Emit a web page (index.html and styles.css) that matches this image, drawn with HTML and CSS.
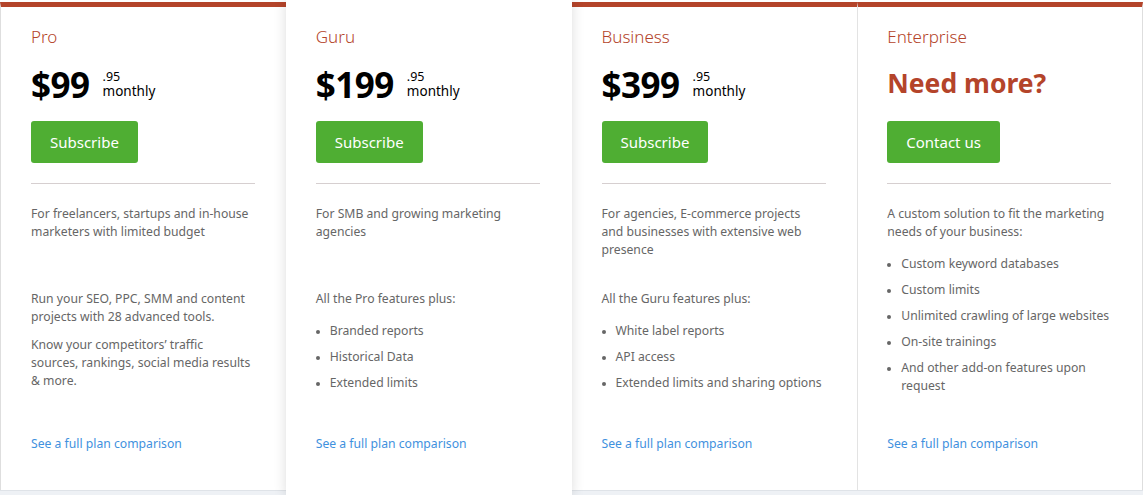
FILE: index.html
```html
<!DOCTYPE html>
<html lang="en">
<head>
<meta charset="utf-8">
<title>Plans</title>
<link rel="stylesheet" href="styles.css">
</head>
<body>
<div class="plans">
  <div class="card">
    <div class="name">Pro</div>
    <div class="price"><span class="amount">$99</span><span class="cents"><span class="c">.95</span><span class="m">monthly</span></span></div>
    <a class="btn">Subscribe</a>
    <hr class="divider">
    <div class="desc"><p>For freelancers, startups and in-house marketers with limited budget</p></div>
    <div class="features">
      <p>Run your SEO, PPC, SMM and content projects with 28 advanced tools.</p>
      <p>Know your competitors’ traffic<br>sources, rankings, social media results &amp; more.</p>
    </div>
    <a class="link">See a full plan comparison</a>
  </div>
  <div class="card featured">
    <div class="name">Guru</div>
    <div class="price"><span class="amount">$199</span><span class="cents"><span class="c">.95</span><span class="m">monthly</span></span></div>
    <a class="btn">Subscribe</a>
    <hr class="divider">
    <div class="desc"><p>For SMB and growing marketing agencies</p></div>
    <div class="features">
      <p>All the Pro features plus:</p>
      <ul>
        <li>Branded reports</li>
        <li>Historical Data</li>
        <li>Extended limits</li>
      </ul>
    </div>
    <a class="link">See a full plan comparison</a>
  </div>
  <div class="card">
    <div class="name">Business</div>
    <div class="price"><span class="amount">$399</span><span class="cents"><span class="c">.95</span><span class="m">monthly</span></span></div>
    <a class="btn">Subscribe</a>
    <hr class="divider">
    <div class="desc"><p>For agencies, E-commerce projects<br>and businesses with extensive web presence</p></div>
    <div class="features">
      <p>All the Guru features plus:</p>
      <ul>
        <li>White label reports</li>
        <li>API access</li>
        <li>Extended limits and sharing options</li>
      </ul>
    </div>
    <a class="link">See a full plan comparison</a>
  </div>
  <div class="card last">
    <div class="name">Enterprise</div>
    <div class="price"><span class="need">Need more?</span></div>
    <a class="btn">Contact us</a>
    <hr class="divider">
    <div class="enterprise">
      <p>A custom solution to fit the marketing needs of your business:</p>
      <ul>
        <li>Custom keyword databases</li>
        <li>Custom limits</li>
        <li>Unlimited crawling of large websites</li>
        <li>On-site trainings</li>
        <li>And other add-on features upon request</li>
      </ul>
    </div>
    <a class="link">See a full plan comparison</a>
  </div>
</div>
</body>
</html>
```

FILE: styles.css
```css
html, body {
  margin: 0;
  padding: 0;
}
body {
  background: #eef1f5;
  font-family: "Noto Sans", "Open Sans", sans-serif;
  color: #666;
  width: 1143px;
  height: 495px;
  overflow: hidden;
}
.plans {
  display: grid;
  grid-template-columns: repeat(4, 1fr);
  background: #fff;
  padding-top: 2px;
  height: 491px;
  box-sizing: border-box;
  border-bottom: 1px solid #dfe3e8;
}
.card {
  display: flex;
  flex-direction: column;
  background: #fff;
  border-top: 5px solid #b4442a;
  padding: 20px 30px 37px 30px;
  box-sizing: border-box;
  min-width: 0;
}
.card:first-child {
  border-left: 1px solid #dedede;
}
.card.featured {
  border-top: 0;
  margin-top: -2px;
  margin-bottom: -6px;
  padding-top: 27px;
  padding-bottom: 43px;
  box-shadow: 0 0 12px rgba(0, 0, 0, 0.14);
  position: relative;
  z-index: 1;
}
.card.last {
  border-left: 1px solid #e3e3e3;
  border-right: 1px solid #dedede;
  padding-left: 29px;
}
.name {
  font-size: 17px;
  line-height: 20px;
  color: #b4442a;
  font-weight: 300;
}
.price {
  display: flex;
  align-items: flex-start;
  height: 42px;
  margin-top: 17px;
  color: #000;
}
.amount {
  font-size: 35px;
  font-weight: 700;
  line-height: 42px;
  letter-spacing: -0.5px;
}
.cents {
  display: flex;
  flex-direction: column;
  margin-left: 13px;
  margin-top: 6px;
  font-size: 12.5px;
  line-height: 14px;
}
.cents .m {
  font-size: 13.5px;
  line-height: 14px;
}
.need {
  font-size: 26.5px;
  font-weight: 700;
  line-height: 38px;
  color: #b4442a;
}
.btn {
  align-self: flex-start;
  margin-top: 15px;
  height: 42px;
  line-height: 42px;
  padding: 0 19px;
  background: #4fae33;
  color: #fff;
  border-radius: 3px;
  font-size: 15px;
}
.divider {
  border: 0;
  border-top: 1px solid #d6cfd0;
  margin: 20px 0 0 0;
  width: 224px;
}
p {
  margin: 0;
}
.desc, .features, .enterprise {
  font-size: 12.2px;
  line-height: 18px;
  color: #666;
}
.desc {
  margin-top: 21px;
  height: 85px;
}
.features p + p {
  margin-top: 10px;
}
ul {
  margin: 14px 0 0 0;
  padding-left: 14px;
}
li {
  margin-bottom: 8px;
}
li::marker {
  font-size: 10px;
}
.enterprise {
  margin-top: 21px;
}
.link {
  margin-top: auto;
  font-size: 12.2px;
  line-height: 18px;
  color: #3f91de;
}
```
